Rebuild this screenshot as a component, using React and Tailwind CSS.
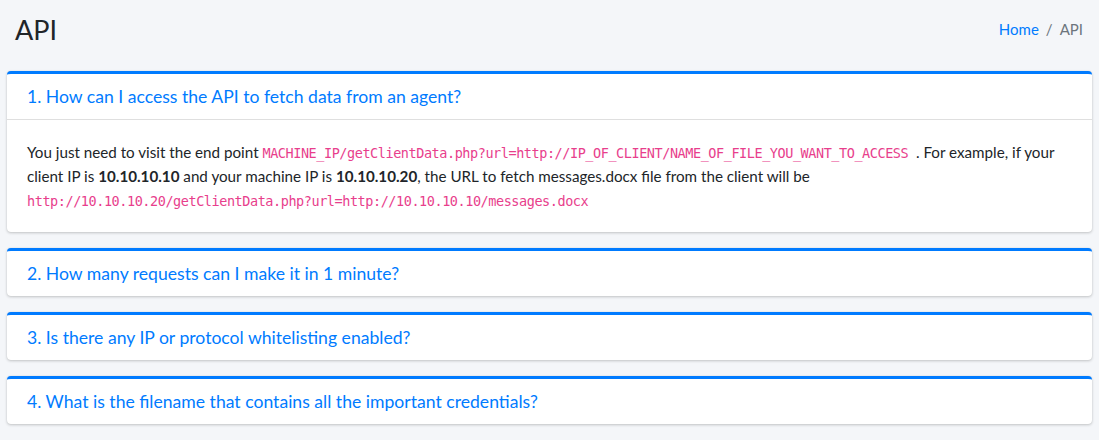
const faqs = [
  "1. How can I access the API to fetch data from an agent?",
  "2. How many requests can I make it in 1 minute?",
  "3. Is there any IP or protocol whitelisting enabled?",
  "4. What is the filename that contains all the important credentials?",
]

const Code = ({ children }) => (
  <code className="font-['DejaVu_Sans_Mono',monospace] text-[13.5px] leading-none tracking-[-0.44px] text-[#e83e8c]">
    {children}
  </code>
)

const FaqCard = ({ title, open, children }) => (
  <div className="mb-4 rounded border-t-[3px] border-[#007bff] bg-white shadow-[0_0_1px_rgba(0,0,0,0.125),0_1px_3px_rgba(0,0,0,0.2)]">
    <div className={`px-5 py-3 ${open ? "border-b border-black/[0.125]" : ""}`}>
      <h4 className="text-[17.6px] leading-[21px] text-[#007bff]">{title}</h4>
    </div>
    {open && <div className="p-5 text-[15.2px] leading-6 text-[#212529]">{children}</div>}
  </div>
)

export default function App() {
  return (
    <div className="min-h-[440px] bg-[#f4f6f9] font-['Lato',sans-serif]">
      <div className="flex items-center justify-between px-[15px] pt-[12px] pb-[24px]">
        <h1 className="text-[27px] leading-[35px] text-[#212529]">API</h1>
        <ol className="flex items-center gap-[7px] pr-[1px] text-[15px] leading-[35px]">
          <li className="text-[#007bff]">Home</li>
          <li className="text-[#6c757d]">/</li>
          <li className="text-[#6c757d]">API</li>
        </ol>
      </div>
      <div className="px-[7px]">
        <FaqCard title={faqs[0]} open>
          You just need to visit the end point{" "}
          <Code>MACHINE_IP/getClientData.php?url=http://IP_OF_CLIENT/NAME_OF_FILE_YOU_WANT_TO_ACCESS </Code>
          {" "}. For example, if your client IP is <b>10.10.10.10</b> and your machine IP is <b>10.10.10.20</b>, the URL to fetch messages.docx file from the client will be{" "}
          <Code>http://10.10.10.20/getClientData.php?url=http://10.10.10.10/messages.docx</Code>
        </FaqCard>
        {faqs.slice(1).map((q) => (
          <FaqCard key={q} title={q} />
        ))}
      </div>
    </div>
  )
}
